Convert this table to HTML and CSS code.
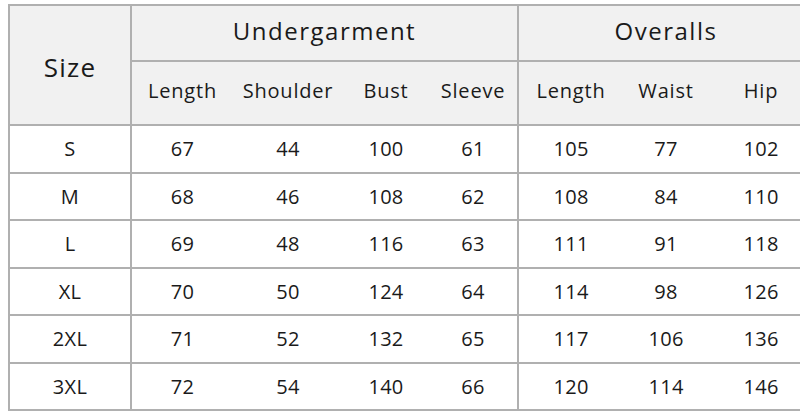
FILE: index.html
```
<!DOCTYPE html>
<html>
<head>
<meta charset="utf-8">
<link rel="stylesheet" href="styles.css">
</head>
<body>
<table class="size-table">
  <colgroup>
    <col class="c-size">
    <col class="c-len">
    <col class="c-sho">
    <col class="c-bust">
    <col class="c-slv">
    <col class="c-olen">
    <col class="c-waist">
    <col class="c-hip">
  </colgroup>
  <thead>
    <tr class="group-row">
      <th class="size-head" rowspan="2">Size</th>
      <th class="group" colspan="4">Undergarment</th>
      <th class="group" colspan="3">Overalls</th>
    </tr>
    <tr class="sub-row">
      <th class="first-under">Length</th>
      <th>Shoulder</th>
      <th>Bust</th>
      <th class="last-under">Sleeve</th>
      <th>Length</th>
      <th>Waist</th>
      <th>Hip</th>
    </tr>
  </thead>
  <tbody>
    <tr><td class="size">S</td><td>67</td><td>44</td><td>100</td><td class="last-under">61</td><td>105</td><td>77</td><td>102</td></tr>
    <tr><td class="size">M</td><td>68</td><td>46</td><td>108</td><td class="last-under">62</td><td>108</td><td>84</td><td>110</td></tr>
    <tr><td class="size">L</td><td>69</td><td>48</td><td>116</td><td class="last-under">63</td><td>111</td><td>91</td><td>118</td></tr>
    <tr><td class="size">XL</td><td>70</td><td>50</td><td>124</td><td class="last-under">64</td><td>114</td><td>98</td><td>126</td></tr>
    <tr><td class="size">2XL</td><td>71</td><td>52</td><td>132</td><td class="last-under">65</td><td>117</td><td>106</td><td>136</td></tr>
    <tr><td class="size">3XL</td><td>72</td><td>54</td><td>140</td><td class="last-under">66</td><td>120</td><td>114</td><td>146</td></tr>
  </tbody>
</table>
</body>
</html>
```
FILE: styles.css
```
html, body {
  margin: 0;
  padding: 0;
  background: #ffffff;
  overflow: hidden;
  width: 800px;
  height: 420px;
}
body {
  font-family: "Open Sans", "Noto Sans", sans-serif;
  color: #1a1a1a;
}
.size-table {
  border-collapse: collapse;
  table-layout: fixed;
  width: 804px;
  margin: 4px 0 0 8px;
  border-top: 2px solid #b0b0b0;
  border-left: 2px solid #b0b0b0;
  border-bottom: 2px solid #b0b0b0;
}
.c-size { width: 122px; }
.c-len { width: 102px; }
.c-sho { width: 110px; }
.c-bust { width: 86px; }
.c-slv { width: 89px; }
.c-olen { width: 105px; }
.c-waist { width: 86px; }
.c-hip { width: 104px; }

th, td {
  padding: 0;
  text-align: center;
  vertical-align: middle;
  font-weight: normal;
}
thead th {
  background: #f1f1f1;
}
.group-row {
  height: 56px;
}
.sub-row {
  height: 64px;
}
.group-row .group {
  font-size: 24px;
  letter-spacing: 1.5px;
  border-bottom: 2px solid #b0b0b0;
  border-left: 2px solid #b0b0b0;
  padding-bottom: 6px;
}
.size-head {
  font-size: 26px;
  letter-spacing: 1.2px;
  border-right: 2px solid #b0b0b0;
  border-bottom: 2px solid #b0b0b0;
  padding-top: 4px;
}
.sub-row th {
  font-size: 20px;
  letter-spacing: 0.8px;
  border-bottom: 2px solid #b0b0b0;
  padding-bottom: 6px;
}
.last-under {
  border-right: 2px solid #b0b0b0;
}
tbody tr {
  height: 47.5px;
}
tbody td {
  font-size: 20px;
  letter-spacing: 0.3px;
  border-bottom: 2px solid #b0b0b0;
}
td.size {
  border-right: 2px solid #b0b0b0;
}
```
